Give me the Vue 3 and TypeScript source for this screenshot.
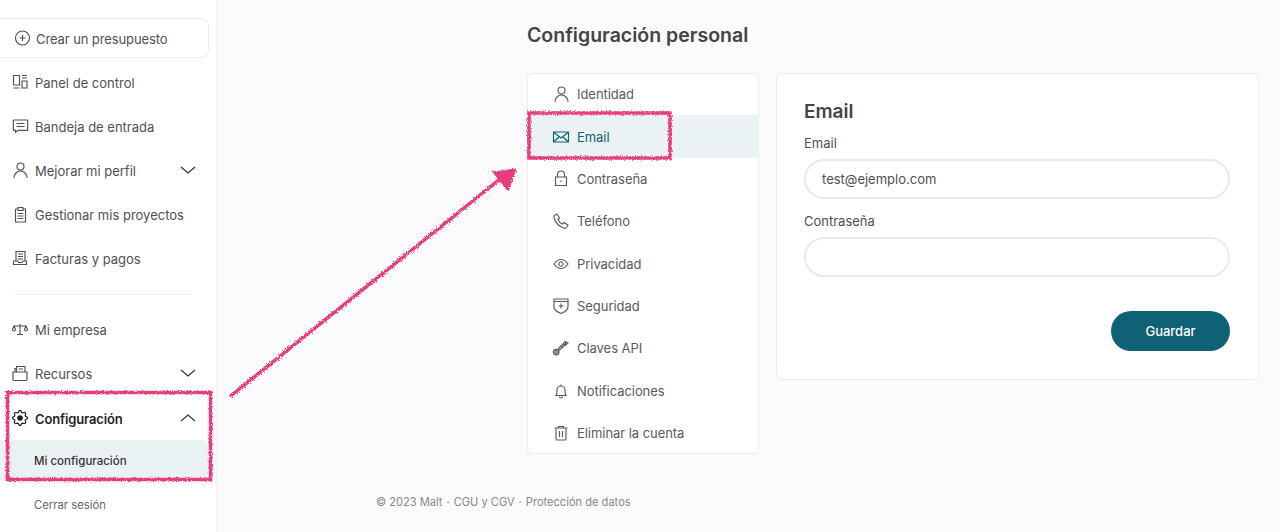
<template>
  <div class="page">
    <aside class="sidebar">
      <button class="create-btn">
        <svg class="icon" viewBox="0 0 20 20"><path :d="icons.plus" /></svg>
        <span class="nav-label">Crear un presupuesto</span>
      </button>

      <a v-for="item in navTop" :key="item.label" class="nav-item">
        <svg class="icon" viewBox="0 0 20 20"><path :d="item.icon" /></svg>
        <span class="nav-label">{{ item.label }}</span>
        <svg v-if="item.chevron" class="chevron" viewBox="0 0 16 8"><path d="M1 1l7 6 7-6" /></svg>
      </a>

      <hr class="divider" />

      <a v-for="item in navBottom" :key="item.label" class="nav-item">
        <svg class="icon" viewBox="0 0 20 20"><path :d="item.icon" /></svg>
        <span class="nav-label">{{ item.label }}</span>
        <svg v-if="item.chevron" class="chevron" viewBox="0 0 16 8"><path d="M1 1l7 6 7-6" /></svg>
      </a>

      <a class="nav-item current">
        <svg class="icon" viewBox="0 0 20 20">
          <path :d="gearPath" />
          <circle class="dot" cx="10" cy="10" r="2.8" />
        </svg>
        <span class="nav-label">Configuración</span>
        <svg class="chevron" viewBox="0 0 16 8"><path d="M1 7l7-6 7 6" /></svg>
      </a>
      <a class="sub-item active">Mi configuración</a>
      <a class="sub-item">Cerrar sesión</a>
    </aside>

    <main class="main">
      <div class="content">
        <h1 class="title">Configuración personal</h1>
        <div class="columns">
          <nav class="menu">
            <a
              v-for="item in menu"
              :key="item.label"
              class="menu-item"
              :class="{ active: item.label === 'Email' }"
            >
              <svg class="icon" viewBox="0 0 20 20"><path :d="item.icon" /></svg>
              {{ item.label }}
            </a>
          </nav>

          <form class="card" @submit.prevent>
            <h2 class="card-title">Email</h2>
            <label class="field">
              <span class="field-label">Email</span>
              <input class="input" type="text" value="test@ejemplo.com" />
            </label>
            <label class="field">
              <span class="field-label">Contraseña</span>
              <input class="input" type="password" />
            </label>
            <div class="actions">
              <button class="save-btn" type="submit">Guardar</button>
            </div>
          </form>
        </div>
      </div>

      <footer class="footer">
        <span>© 2023 Malt</span>
        <span>·</span>
        <span>CGU y CGV</span>
        <span>·</span>
        <span>Protección de datos</span>
      </footer>
    </main>

    <!-- anotaciones dibujadas a mano sobre la captura -->
    <svg class="marks" width="1280" height="532" viewBox="0 0 1280 532">
      <defs>
        <filter id="rough" x="-5%" y="-5%" width="110%" height="110%">
          <feTurbulence type="fractalNoise" baseFrequency="0.8" numOctaves="2" seed="3" />
          <feDisplacementMap in="SourceGraphic" scale="3.500" />
        </filter>
      </defs>
      <g filter="url(#rough)" class="mark-lines">
        <rect x="7.500" y="392.500" width="203" height="87" />
        <rect x="529" y="113" width="141" height="45" />
        <path d="M230 396.500L500 179" />
        <path class="head" d="M493 172l23-3-8 22z" />
      </g>
    </svg>
  </div>
</template>

<script setup lang="ts">
import { computed } from 'vue'

interface NavItem {
  label: string
  icon: string
  chevron?: boolean
}

const icons = {
  plus: 'M17.500 10a7 7 0 1 1-14 0a7 7 0 1 1 14 0z M10.500 7v6 M7.500 10h6',
  panel: 'M3.500 3.500h6v9.500h-6z M3.500 16h6 M12 3.500h5 M12 6h5 M12 9h5v7h-5z',
  inbox: 'M4 4h13a.7.7 0 0 1 .7.7v9a.7.7 0 0 1-.7.7H8l-2.500 2v-2H4a.7.7 0 0 1-.7-.7v-9A.7.7 0 0 1 4 4z M6.500 7.500h8 M6.500 10.500h8',
  person: 'M14 6.500a3.500 3.500 0 1 1-7 0a3.500 3.500 0 1 1 7 0z M4 18c0-4 3-7 6.500-7s6.500 3 6.500 7',
  clipboard: 'M5.500 5h2.500 M13 5h2.500v13h-10v-13 M8 3.500h5v3h-5z M7.500 9.500h6 M7.500 12h6 M7.500 14.500h6',
  invoice: 'M6 12.500v-9h9v9 M8 6h5 M8 8.500h5 M8 11h5 M3.500 13h4l1 1.500h3.500l1-1.500h3.500v3.500h-13z',
  scale: 'M10 5v10 M7 15.500h6 M4 7h12 M2.500 10.500l1.500-3.500 1.500 3.500a1.500 1.500 0 0 1-3 0z M14.500 10.500l1.500-3.500 1.500 3.500a1.500 1.500 0 0 1-3 0z',
  folder: 'M3 9h14v7.500a1 1 0 0 1-1 1H4a1 1 0 0 1-1-1z M5 9V5.500h1 M6.500 9V3.500h8.500V9 M8.500 6h4.500',
  mail: 'M2.500 5h15v10h-15z M3 5.500l7 5.500 7-5.500 M3 14.500l5-4.500 M17 14.500l-5-4.500',
  lock: 'M4.500 8h11v8.500h-11z M6.500 8V5.500a3.500 3.500 0 0 1 7 0V8 M10 11.500v1.500',
  phone: 'M3.500 4.500l2.500-1.500 2.500 4-1.500 1.500c.8 2 2.500 3.700 4.500 4.500l1.500-1.500 4 2.500-1.500 2.500c-.5.7-1.500 1-2.500.7C8.500 15.500 4.500 11.500 3 7c-.3-1 0-2 .5-2.500z',
  eye: 'M3 10c2-3 4.500-4.500 7-4.500s5 1.500 7 4.500c-2 3-4.500 4.500-7 4.500S5 13 3 10z M12.200 10a2.200 2.200 0 1 1-4.400 0a2.200 2.200 0 1 1 4.400 0z',
  shield: 'M3 3h14v7.500c0 3-3 5.500-7 7-4-1.500-7-4-7-7z M3 5.500h14 M10 7.500v5 M7.500 10h5',
  key: 'M8 14a2.800 2.800 0 1 1-5.600 0a2.800 2.800 0 1 1 5.600 0z M6.500 14a1.300 1.300 0 1 1-2.600 0a1.300 1.300 0 1 1 2.600 0z M7 11l6.500-6.500 M8 12.500l6.500-6.500 M10.500 8l2 2 M12.500 6l2 2 M14 3.500l3 1.500-2 2z',
  bell: 'M5 14.500c1-1 1-3 1-5.500a4 4 0 0 1 8 0c0 2.500 0 4.500 1 5.500z M10 3.500v1.500 M8.500 15.500a1.500 1.500 0 0 0 3 0',
  trash: 'M3.500 5h13 M7.500 5V3.500h5V5 M5 5v11a1 1 0 0 0 1 1h8a1 1 0 0 0 1-1V5 M8.500 8v6 M11.500 8v6',
}

const navTop: NavItem[] = [
  { label: 'Panel de control', icon: icons.panel },
  { label: 'Bandeja de entrada', icon: icons.inbox },
  { label: 'Mejorar mi perfil', icon: icons.person, chevron: true },
  { label: 'Gestionar mis proyectos', icon: icons.clipboard },
  { label: 'Facturas y pagos', icon: icons.invoice },
]

const navBottom: NavItem[] = [
  { label: 'Mi empresa', icon: icons.scale },
  { label: 'Recursos', icon: icons.folder, chevron: true },
]

const menu: NavItem[] = [
  { label: 'Identidad', icon: icons.person },
  { label: 'Email', icon: icons.mail },
  { label: 'Contraseña', icon: icons.lock },
  { label: 'Teléfono', icon: icons.phone },
  { label: 'Privacidad', icon: icons.eye },
  { label: 'Seguridad', icon: icons.shield },
  { label: 'Claves API', icon: icons.key },
  { label: 'Notificaciones', icon: icons.bell },
  { label: 'Eliminar la cuenta', icon: icons.trash },
]

/**
 * Contorno de la rueda dentada
 */
const gearPath = computed(() => {
  const teeth = 8
  const points: string[] = []
  for (let i = 0; i < teeth * 4; i++) {
    const radius = i % 4 < 2 ? 7.4 : 5.8
    const angle = ((i - 0.5) / (teeth * 4)) * Math.PI * 2
    points.push(`${(10 + radius * Math.cos(angle)).toFixed(2)} ${(10 + radius * Math.sin(angle)).toFixed(2)}`)
  }
  return `M${points.join('L')}z`
})
</script>

<style>
html,
body {
  margin: 0;
  overflow: hidden;
}
</style>

<style scoped>
.page {
  position: relative;
  display: flex;
  height: 532px;
  font-family: Inter, 'Noto Sans', sans-serif;
  color: #505050;
  background: #fbfbfb;
  overflow: hidden;
}

.sidebar {
  width: 217px;
  height: 532px;
  flex: none;
  box-sizing: border-box;
  padding-top: 18px;
  background: #fff;
  border-right: 1px solid #f1f1f1;
}

.icon {
  width: 20px;
  height: 20px;
  flex: none;
  fill: none;
  stroke: currentColor;
  stroke-width: 1.15;
}

.icon .dot {
  fill: currentColor;
  stroke: none;
}

.create-btn {
  display: flex;
  align-items: center;
  gap: 4px;
  width: 210px;
  height: 40px;
  margin: 0 0 2px -1px;
  padding: 0 0 0 12px;
  box-sizing: border-box;
  font: inherit;
  font-size: 13px;
  letter-spacing: -0.1px;
  text-align: left;
  color: #505050;
  background: #fff;
  border: 1px solid #ececec;
  border-radius: 0 8px 8px 0;
}

.nav-item {
  display: flex;
  align-items: center;
  gap: 5px;
  height: 44px;
  padding: 0 20px 0 10px;
  font-size: 13px;
}

.nav-label {
  flex: 1;
  padding-top: 2px;
}

.chevron {
  width: 16px;
  height: 8px;
  fill: none;
  stroke: #333;
  stroke-width: 1.2;
}

.divider {
  height: 1px;
  margin: 14px 24px 12px 15px;
  border: 0;
  background: #ececec;
}

.nav-item.current {
  height: 45px;
  color: #1f1f1f;
  font-weight: 600;
  letter-spacing: -0.15px;
}

.sub-item {
  display: flex;
  align-items: center;
  width: 208px;
  height: 40px;
  box-sizing: border-box;
  padding: 2px 0 0 34px;
  font-size: 11.300px;
  color: #666;
}

.sub-item.active {
  margin-bottom: 4px;
  color: #333;
  font-weight: 500;
  font-size: 11.500px;
  background: #ebf2f3;
  border-radius: 0 8px 8px 0;
}

.main {
  flex: 1;
  min-width: 0;
}

.content {
  padding-left: 310px;
  padding-right: 21px;
}

.title {
  height: 73px;
  margin: 0;
  padding-top: 23px;
  box-sizing: border-box;
  font-size: 19.500px;
  font-weight: 600;
  line-height: 24px;
  color: #444;
}

.columns {
  display: flex;
  align-items: flex-start;
  gap: 17px;
}

.menu {
  width: 232px;
  height: 381px;
  box-sizing: border-box;
  flex: none;
  background: #fff;
  border: 1px solid #ececec;
  border-radius: 4px;
}

.menu-item {
  display: flex;
  align-items: center;
  gap: 6px;
  height: 42.375px;
  padding-left: 23px;
  font-size: 13px;
  letter-spacing: -0.05px;
  color: #5a5a5a;
}

.menu-item:first-child {
  margin-top: -1px;
}

.menu-item.active {
  color: #0f6175;
  background: #ebf2f3;
}

.card {
  flex: 1;
  height: 307px;
  box-sizing: border-box;
  padding: 26px 28px 0 27px;
  background: #fff;
  border: 1px solid #ececec;
  border-radius: 6px;
}

.card-title {
  margin: 0 0 10px;
  font-size: 19px;
  font-weight: 600;
  line-height: 24px;
  color: #444;
}

.field {
  display: block;
  margin-bottom: 13px;
}

.field-label {
  display: block;
  margin-bottom: 7px;
  font-size: 13px;
  line-height: 18px;
}

.input {
  display: block;
  width: 100%;
  height: 40px;
  box-sizing: border-box;
  padding: 0 16px;
  font: inherit;
  font-size: 13px;
  color: #505050;
  background: #fff;
  border: 2px solid #eaeae6;
  border-radius: 20px;
  outline: none;
}

.actions {
  display: flex;
  justify-content: flex-end;
  margin-top: 34px;
}

.save-btn {
  width: 119px;
  height: 40px;
  font: inherit;
  font-size: 13px;
  font-weight: 500;
  color: #fff;
  background: #0f6175;
  border: 0;
  border-radius: 20px;
}

.footer {
  display: flex;
  gap: 4px;
  margin-top: 39px;
  padding-left: 159px;
  font-size: 11.100px;
  line-height: 18px;
  color: #888;
}

.marks {
  position: absolute;
  top: 0;
  left: 0;
  pointer-events: none;
}

.mark-lines {
  fill: none;
  stroke: #ea3a7d;
  stroke-width: 3.500;
}

.mark-lines .head {
  fill: #ea3a7d;
  stroke-width: 1;
}
</style>
